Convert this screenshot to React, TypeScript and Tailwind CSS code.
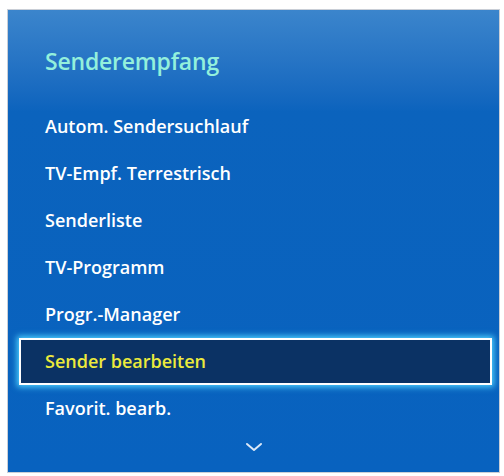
const items = [
  'Autom. Sendersuchlauf',
  'TV-Empf. Terrestrisch',
  'Senderliste',
  'TV-Programm',
  'Progr.-Manager',
  'Sender bearbeiten',
  'Favorit. bearb.',
]

const selected = 5

export default function App() {
  return (
    <div className="w-[504px] h-[476px] bg-white pl-[7px] pt-[9px]" style={{ fontFamily: '"Open Sans", "Noto Sans", sans-serif' }}>
      <div className="w-[493px] h-[464px] border border-[#c9ced6] bg-gradient-to-b from-[#3b85cc] via-[#0b63bd] via-[22%] to-[#0862bf] flex flex-col">
        {/* Title */}
        <div className="h-[30px] mt-[36px] pl-[37px] flex items-center text-[23px] font-semibold text-[#93f0dc] tracking-[-0.2px]">
          Senderempfang
        </div>

        {/* Menu list */}
        <div className="mt-[27px] flex flex-col">
          {items.map((label, i) =>
            i === selected ? (
              <div
                key={label}
                className="h-[47px] ml-[11px] mr-[7px] flex items-center pl-[24px] bg-[#0b3264] border-2 border-white text-[#ecea3c] text-[18px] font-semibold shadow-[0_0_6px_2px_#4fd2ff]"
              >
                {label}
              </div>
            ) : (
              <div key={label} className="h-[47px] flex items-center pl-[37px] text-white text-[18px] font-semibold">
                {label}
              </div>
            )
          )}
        </div>

        {/* Scroll indicator */}
        <div className="flex justify-center mt-[10px]">
          <svg width="18" height="10" viewBox="0 0 18 10" fill="none">
            <path d="M2 2 L9 8 L16 2" stroke="#dbe8f7" strokeWidth="2" strokeLinecap="round" strokeLinejoin="round" />
          </svg>
        </div>
      </div>
    </div>
  )
}
